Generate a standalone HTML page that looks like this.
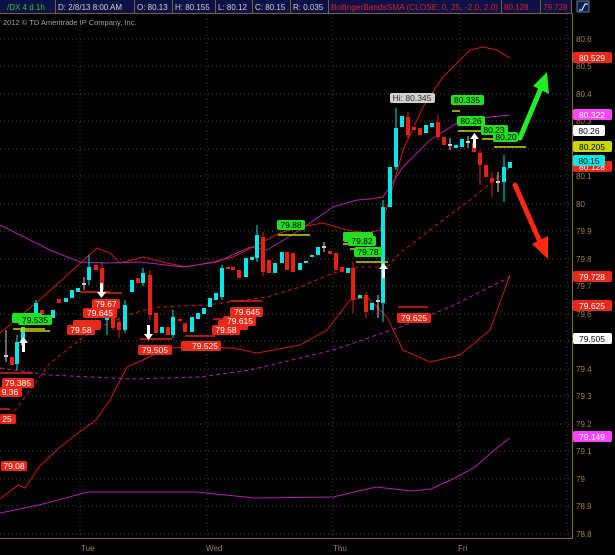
<!DOCTYPE html>
<html><head><meta charset="utf-8"><style>
html,body{margin:0;padding:0;background:#000;width:615px;height:555px;overflow:hidden}
svg{display:block}
text{font-family:"Liberation Sans",sans-serif}
</style></head><body>
<svg width="615" height="555" viewBox="0 0 615 555" xmlns="http://www.w3.org/2000/svg">
<rect width="615" height="555" fill="#000"/>
<!-- header -->
<rect x="0" y="0" width="571" height="13" fill="#0c1248"/>
<line x1="0" y1="13.5" x2="573" y2="13.5" stroke="#7a6030"/>
<g stroke="#7a6030">
<line x1="55.5" y1="0" x2="55.5" y2="13"/><line x1="134.5" y1="0" x2="134.5" y2="13"/><line x1="172.5" y1="0" x2="172.5" y2="13"/><line x1="215.5" y1="0" x2="215.5" y2="13"/><line x1="252.5" y1="0" x2="252.5" y2="13"/><line x1="290.5" y1="0" x2="290.5" y2="13"/><line x1="328.5" y1="0" x2="328.5" y2="13"/><line x1="501.5" y1="0" x2="501.5" y2="13"/><line x1="540.5" y1="0" x2="540.5" y2="13"/><line x1="571.5" y1="0" x2="571.5" y2="13"/>
</g>
<g font-size="8" fill="#d0d0d0">
<text x="7" y="10" fill="#22cc22">/DX 4 d 1h</text>
<text x="58" y="10">D: 2/8/13 8:00 AM</text>
<text x="137" y="10">O: 80.13</text>
<text x="175" y="10">H: 80.155</text>
<text x="218" y="10">L: 80.12</text>
<text x="255" y="10">C: 80.15</text>
<text x="293" y="10">R: 0.035</text>
<text x="331" y="10" fill="#e02020" textLength="167" lengthAdjust="spacingAndGlyphs">BollingerBandsSMA (CLOSE, 0, 25, -2.0, 2.0)</text>
<text x="504" y="10" fill="#e02020">80.128</text>
<text x="543" y="10" fill="#e02020">79.728</text>
</g>
<rect x="577" y="1" width="12" height="11" fill="#0c2050" stroke="#6080a0"/>
<path d="M579 10 h3 l3 -6 h3" stroke="#fff" fill="none" stroke-width="1"/>
<text x="3" y="25" font-size="7.5" fill="#a0a0a0">2012 © TD Ameritrade IP Company, Inc.</text>
<!-- axes -->
<line x1="572.5" y1="14" x2="572.5" y2="539" stroke="#8a6a30"/>
<line x1="0" y1="538.5" x2="573" y2="538.5" stroke="#8a6a30"/>
<g stroke="#5a4a28" stroke-dasharray="1,3">
<line x1="0" y1="39" x2="572" y2="39"/><line x1="0" y1="66" x2="572" y2="66"/><line x1="0" y1="94" x2="572" y2="94"/><line x1="0" y1="121" x2="572" y2="121"/><line x1="0" y1="149" x2="572" y2="149"/><line x1="0" y1="176" x2="572" y2="176"/><line x1="0" y1="204" x2="572" y2="204"/><line x1="0" y1="231" x2="572" y2="231"/><line x1="0" y1="259" x2="572" y2="259"/><line x1="0" y1="286" x2="572" y2="286"/><line x1="0" y1="314" x2="572" y2="314"/><line x1="0" y1="341" x2="572" y2="341"/><line x1="0" y1="369" x2="572" y2="369"/><line x1="0" y1="396" x2="572" y2="396"/><line x1="0" y1="424" x2="572" y2="424"/><line x1="0" y1="451" x2="572" y2="451"/><line x1="0" y1="479" x2="572" y2="479"/><line x1="0" y1="506" x2="572" y2="506"/><line x1="0" y1="534" x2="572" y2="534"/>
<line x1="80" y1="14" x2="80" y2="538"/><line x1="207" y1="14" x2="207" y2="538"/><line x1="333" y1="14" x2="333" y2="538"/><line x1="459" y1="14" x2="459" y2="538"/><line x1="567" y1="14" x2="567" y2="538"/>
</g>
<g font-size="8" fill="#a08048">
<text x="576" y="42">80.6</text><text x="576" y="69">80.5</text><text x="576" y="97">80.4</text><text x="576" y="124">80.3</text><text x="576" y="179">80.1</text><text x="576" y="207">80</text><text x="576" y="234">79.9</text><text x="576" y="262">79.8</text><text x="576" y="289">79.7</text><text x="576" y="317">79.6</text><text x="576" y="372">79.4</text><text x="576" y="399">79.3</text><text x="576" y="427">79.2</text><text x="576" y="454">79.1</text><text x="576" y="482">79</text><text x="576" y="509">78.9</text><text x="576" y="537">78.8</text>
<text x="81" y="551">Tue</text><text x="206" y="551">Wed</text><text x="333" y="551">Thu</text><text x="458" y="551">Fri</text>
</g>
<!-- bands -->
<g fill="none" stroke-width="1">
<polyline stroke="#cc1a10" points="0,333 43,297 97,248 110,253 120,263 143,257 167,263 187,267 213,262 233,257 253,247 280,233 300,227 323,223 347,230 367,233 380,230 390,197 403,150 423,107 443,77 470,50 483,47 497,50 510,58"/>
<polyline stroke="#b020b0" points="0,225 50,250 80,262 107,263 140,262 183,267 217,262 250,247 267,250 300,230 333,207 357,200 370,199 383,197 403,167 430,140 457,123 480,118 510,115"/>
<polyline stroke="#cc1a10" stroke-dasharray="4,3" points="10,417 50,363 93,330 127,315 157,307 207,305 267,297 300,287 333,273 360,267 387,267"/>
<polyline stroke="#cc1a10" stroke-dasharray="4,3" points="387,267 400,253 447,217 470,200 510,167"/>
<polyline stroke="#cc1a10" points="0,499 18,485 25,488 39,467 59,448 78,433 96,420 110,400 127,367 143,360 167,348 200,347 233,348 257,353 300,345 327,330 350,300 367,297 387,317 403,350 430,362 460,355 490,330 510,275"/>
<polyline stroke="#b020b0" points="0,513 39,505 88,492 137,492 196,492 255,498 333,497 376,487 412,491 431,489 455,478 475,467 498,447 510,438"/>
<polyline stroke="#b020b0" stroke-dasharray="4,3" points="0,368 50,375 133,379 200,377 250,370 300,358 333,350 400,327 450,307 510,277"/>
</g>
<!-- candles: wicks -->
<g stroke-width="1">
<g stroke="#00e0e0">
<line x1="17" y1="335" x2="17" y2="370"/><line x1="36" y1="300" x2="36" y2="318"/><line x1="89" y1="255" x2="89" y2="285"/><line x1="125" y1="300" x2="125" y2="333"/><line x1="143" y1="268" x2="143" y2="286"/><line x1="222" y1="265" x2="222" y2="300"/><line x1="257" y1="225" x2="257" y2="262"/><line x1="383" y1="200" x2="383" y2="322"/><line x1="396" y1="108" x2="396" y2="170"/><line x1="504" y1="155" x2="504" y2="202"/><line x1="107" y1="312" x2="107" y2="335"/><line x1="173" y1="310" x2="173" y2="338"/>
</g>
<g stroke="#e02010">
<line x1="150" y1="270" x2="150" y2="320"/><line x1="263" y1="232" x2="263" y2="276"/><line x1="353" y1="262" x2="353" y2="313"/><line x1="366" y1="292" x2="366" y2="318"/><line x1="408" y1="112" x2="408" y2="140"/><line x1="480" y1="150" x2="480" y2="185"/><line x1="492" y1="172" x2="492" y2="197"/><line x1="102" y1="262" x2="102" y2="292"/><line x1="438" y1="115" x2="438" y2="140"/><line x1="113" y1="312" x2="113" y2="330"/><line x1="119" y1="318" x2="119" y2="338"/>
</g>
<g stroke="#ccc"><line x1="6" y1="330" x2="6" y2="362"/><line x1="84" y1="277" x2="84" y2="290"/><line x1="324" y1="242" x2="324" y2="252"/><line x1="378" y1="295" x2="378" y2="318"/><line x1="450" y1="138" x2="450" y2="150"/><line x1="468" y1="136" x2="468" y2="148"/><line x1="498" y1="172" x2="498" y2="192"/></g>
</g>
<!-- bodies cyan -->
<g fill="#00e8e8">
<rect x="15" y="342" width="4" height="22"/><rect x="21" y="327" width="4" height="18"/><rect x="34" y="303" width="4" height="12"/><rect x="51" y="310" width="4" height="8"/>
<rect x="64" y="298" width="4" height="4"/><rect x="70" y="290" width="4" height="8"/><rect x="76" y="288" width="4" height="4"/><rect x="87" y="267" width="4" height="13"/><rect x="105" y="317" width="4" height="3"/><rect x="123" y="305" width="4" height="25"/><rect x="130" y="280" width="4" height="12"/><rect x="141" y="273" width="4" height="10"/><rect x="160" y="327" width="4" height="6"/><rect x="171" y="317" width="4" height="18"/><rect x="190" y="317" width="4" height="15"/><rect x="196" y="313" width="4" height="6"/><rect x="202" y="308" width="4" height="6"/><rect x="208" y="298" width="4" height="9"/><rect x="214" y="293" width="4" height="7"/><rect x="220" y="268" width="4" height="29"/><rect x="244" y="258" width="4" height="19"/><rect x="250" y="257" width="4" height="3"/><rect x="255" y="235" width="4" height="23"/><rect x="273" y="263" width="4" height="10"/><rect x="280" y="252" width="4" height="11"/><rect x="298" y="263" width="4" height="7"/><rect x="304" y="261" width="4" height="2"/><rect x="310" y="255" width="4" height="2"/><rect x="316" y="247" width="4" height="8"/><rect x="346" y="268" width="4" height="5"/><rect x="358" y="295" width="4" height="3"/><rect x="370" y="303" width="4" height="7"/>
<rect x="381" y="207" width="4" height="96"/><rect x="388" y="167" width="4" height="40"/><rect x="394" y="128" width="4" height="39"/><rect x="400" y="116" width="4" height="11"/><rect x="424" y="125" width="4" height="8"/><rect x="430" y="123" width="4" height="4"/><rect x="454" y="145" width="4" height="3"/><rect x="460" y="139" width="4" height="8"/><rect x="502" y="167" width="4" height="15"/><rect x="508" y="162" width="4" height="6"/>
</g>
<!-- bodies red -->
<g fill="#e82010">
<rect x="10" y="357" width="4" height="8"/><rect x="40" y="310" width="4" height="4"/><rect x="57" y="299" width="4" height="4"/><rect x="94" y="265" width="4" height="5"/><rect x="100" y="268" width="4" height="22"/><rect x="111" y="317" width="4" height="11"/><rect x="117" y="322" width="4" height="8"/><rect x="136" y="278" width="4" height="5"/><rect x="148" y="275" width="4" height="40"/><rect x="154" y="313" width="4" height="20"/><rect x="166" y="327" width="4" height="8"/><rect x="178" y="319" width="4" height="2"/><rect x="183" y="323" width="4" height="9"/><rect x="226" y="267" width="4" height="2"/><rect x="231" y="267" width="4" height="3"/><rect x="237" y="270" width="4" height="8"/><rect x="261" y="237" width="4" height="35"/><rect x="267" y="260" width="4" height="13"/><rect x="285" y="252" width="4" height="18"/><rect x="291" y="253" width="4" height="19"/><rect x="328" y="251" width="4" height="3"/><rect x="334" y="253" width="4" height="17"/><rect x="340" y="267" width="4" height="5"/><rect x="351" y="268" width="4" height="32"/><rect x="364" y="295" width="4" height="17"/>
<rect x="406" y="117" width="4" height="18"/><rect x="412" y="127" width="4" height="3"/><rect x="418" y="128" width="4" height="7"/><rect x="436" y="122" width="4" height="15"/><rect x="442" y="137" width="4" height="8"/><rect x="472" y="143" width="4" height="9"/><rect x="478" y="153" width="4" height="12"/><rect x="484" y="165" width="4" height="12"/><rect x="490" y="178" width="4" height="4"/>
</g>
<g fill="#ccc"><rect x="4" y="355" width="4" height="2"/><rect x="82" y="283" width="4" height="2"/><rect x="322" y="246" width="4" height="2"/><rect x="376" y="300" width="4" height="2"/><rect x="448" y="144" width="4" height="2"/><rect x="466" y="141" width="4" height="2"/><rect x="496" y="181" width="4" height="2"/></g>
<!-- level lines -->
<g stroke-width="1.5">
<g stroke="#c8d800"><line x1="13" y1="329" x2="45" y2="329"/><line x1="20" y1="331" x2="50" y2="331"/><line x1="278" y1="235" x2="310" y2="235"/><line x1="343" y1="244" x2="352" y2="244"/><line x1="350" y1="249" x2="358" y2="249"/><line x1="356" y1="262" x2="388" y2="262"/><line x1="452" y1="111" x2="460" y2="111"/><line x1="458" y1="131" x2="490" y2="131"/><line x1="482" y1="139" x2="497" y2="139"/><line x1="494" y1="147" x2="526" y2="147"/></g>
<g stroke="#e02010"><line x1="0" y1="373" x2="33" y2="373"/><line x1="80" y1="292" x2="110" y2="292"/><line x1="100" y1="293" x2="122" y2="293"/><line x1="140" y1="339" x2="172" y2="339"/><line x1="185" y1="336" x2="215" y2="336"/><line x1="230" y1="301" x2="262" y2="301"/><line x1="213" y1="319" x2="240" y2="319"/><line x1="398" y1="307" x2="428" y2="307"/><line x1="0" y1="409" x2="10" y2="409"/></g>
</g>
<!-- white arrows -->
<g fill="#fff">
<path d="M100 283h3v9h3l-4.5 6-4.5-6h3z"/><path d="M147 325h3v9h3l-4.5 6-4.5-6h3z"/>
<path d="M22 352h3v-9h3l-4.5-6-4.5 6h3z"/><path d="M382 278h3v-9h3l-4.5-6-4.5 6h3z"/><path d="M473 148h3v-9h3l-4.5-6-4.5 6h3z"/>
</g>
<!-- chart labels -->
<g font-size="8.5" fill="#fff" text-anchor="middle">
<g fill="#e82818">
<rect x="2" y="378" width="32" height="10" rx="2"/><rect x="0" y="387" width="22" height="10" rx="2"/><rect x="0" y="414" width="16" height="10" rx="2"/><rect x="1" y="461" width="26" height="10" rx="2"/>
<rect x="73" y="320" width="28" height="10" rx="2"/><rect x="67" y="325" width="28" height="10" rx="2"/><rect x="92" y="299" width="28" height="10" rx="2"/><rect x="83" y="308" width="34" height="10" rx="2"/>
<rect x="138" y="345" width="34" height="10" rx="2"/><rect x="181" y="341" width="20" height="10" rx="2"/><rect x="188" y="341" width="33" height="10" rx="2"/>
<rect x="212" y="325" width="28" height="10" rx="2"/><rect x="218" y="320" width="30" height="10" rx="2"/><rect x="223" y="316" width="33" height="10" rx="2"/><rect x="230" y="307" width="33" height="10" rx="2"/>
<rect x="397" y="313" width="34" height="10" rx="2"/>
</g>
<text x="18" y="386">79.385</text><text x="10" y="395">9.36</text><text x="7" y="422">25</text><text x="14" y="469">79.08</text>
<text x="81" y="333">79.58</text><text x="106" y="307">79.67</text><text x="100" y="316">79.645</text>
<text x="155" y="353">79.505</text><text x="205" y="349">79.525</text>
<text x="226" y="333">79.58</text><text x="240" y="324">79.615</text><text x="247" y="315">79.645</text>
<text x="414" y="321">79.625</text>
<g fill="#20e020">
<rect x="12" y="313" width="30" height="10" rx="2"/><rect x="18" y="315" width="34" height="10" rx="2"/><rect x="277" y="220" width="28" height="10" rx="2"/><rect x="343" y="232" width="30" height="10" rx="2"/><rect x="348" y="236" width="28" height="10" rx="2"/><rect x="354" y="247" width="28" height="10" rx="2"/>
<rect x="451" y="95" width="33" height="10" rx="2"/><rect x="457" y="116" width="28" height="10" rx="2"/><rect x="481" y="125" width="27" height="10" rx="2"/><rect x="493" y="132" width="25" height="10" rx="2"/>
</g>
<g fill="#000">
<text x="35" y="323">79.535</text><text x="291" y="228">79.88</text><text x="362" y="244">79.82</text><text x="368" y="255">79.78</text>
<text x="467" y="103">80.335</text><text x="471" y="124">80.26</text><text x="494" y="133">80.23</text><text x="506" y="140">80.20</text>
</g>
<rect x="390" y="93" width="45" height="10" rx="2" fill="#d0d0d0"/><text x="412" y="101" fill="#303030">Hi: 80.345</text>
</g>
<!-- big arrows -->
<g stroke-linecap="round">
<line x1="520" y1="138" x2="541" y2="88" stroke="#20ee20" stroke-width="5"/>
<path d="M547 72 L549 94 L533 86 Z" fill="#20ee20"/>
<line x1="515" y1="185" x2="540" y2="242" stroke="#ff2810" stroke-width="5"/>
<path d="M548 259 L548 236 L532 244 Z" fill="#ff2810"/>
</g>
<!-- right axis labels -->
<g font-size="8.5" text-anchor="middle">
<rect x="573" y="52" width="39" height="11" rx="2" fill="#e82818"/><text x="592" y="61" fill="#fff">80.529</text>
<rect x="573" y="109" width="39" height="11" rx="2" fill="#ff44ff"/><text x="592" y="118" fill="#fff">80.322</text>
<rect x="573" y="125" width="32" height="11" rx="2" fill="#fff"/><text x="589" y="134" fill="#000">80.26</text>
<rect x="573" y="141" width="39" height="11" rx="2" fill="#c8d800"/><text x="592" y="150" fill="#000">80.205</text>
<rect x="573" y="161" width="39" height="11" rx="2" fill="#e82818"/><text x="592" y="170" fill="#fff">80.128</text>
<rect x="573" y="155" width="32" height="11" rx="2" fill="#00e8e8"/><text x="589" y="164" fill="#000">80.15</text>
<rect x="573" y="271" width="39" height="11" rx="2" fill="#e82818"/><text x="592" y="280" fill="#fff">79.728</text>
<rect x="573" y="300" width="39" height="11" rx="2" fill="#e82818"/><text x="592" y="309" fill="#fff">79.625</text>
<rect x="573" y="333" width="39" height="11" rx="2" fill="#fff"/><text x="592" y="342" fill="#000">79.505</text>
<rect x="573" y="431" width="39" height="11" rx="2" fill="#ff44ff"/><text x="592" y="440" fill="#fff">79.149</text>
</g>
</svg>
</body></html>
